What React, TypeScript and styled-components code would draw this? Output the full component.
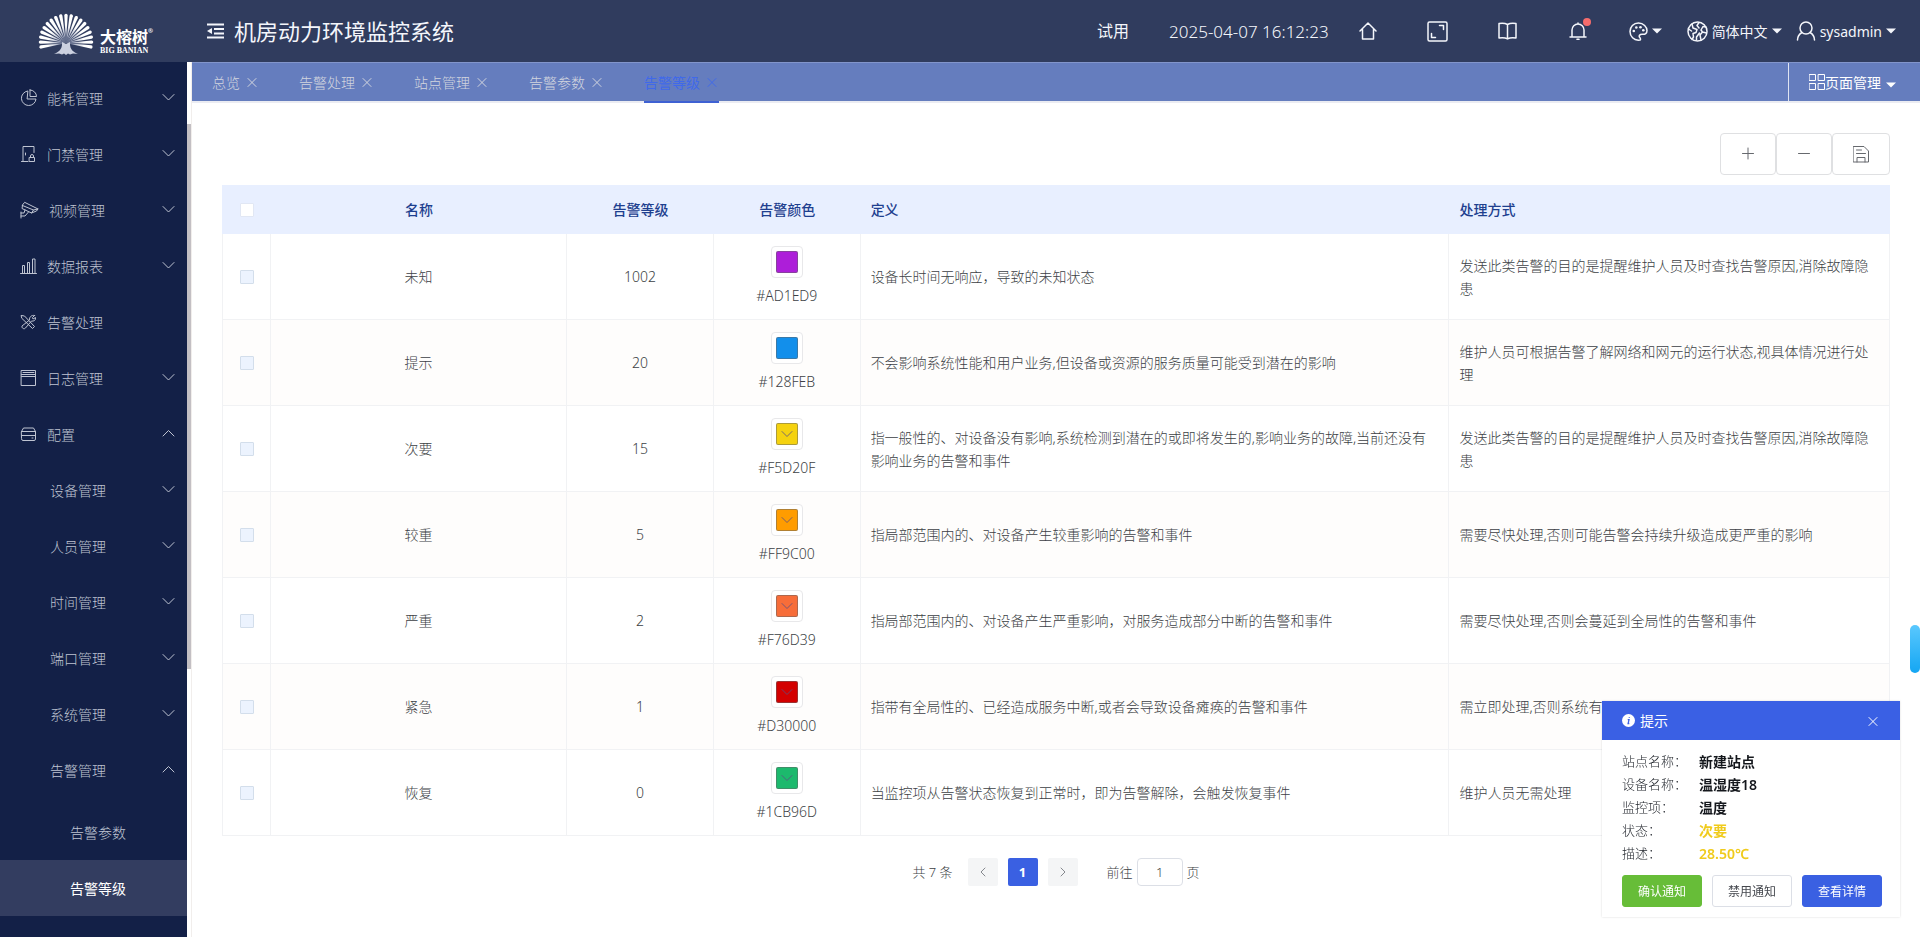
import React, { useState } from "react";
import styled, { createGlobalStyle } from "styled-components";

const GlobalStyle = createGlobalStyle`
  *, *::before, *::after { box-sizing: border-box; }
  body {
    margin: 0;
    background: #fff;
    color: #3c3f45;
    font-family: "Noto Sans", "Noto Sans CJK SC", sans-serif;
    font-size: 14px;
    line-height: 23px;
  }
  button, input { font: inherit; color: inherit; }
  button { padding: 0; border: 0; background: none; cursor: pointer; }
  svg { display: block; flex: none; }
`;

const Page = styled.div`
  display: flex;
  flex-direction: column;
  min-height: 100vh;
`;

/* ---------- top bar ---------- */

const TopBar = styled.header`
  display: flex;
  align-items: center;
  height: 62px;
  padding: 0 24px 0 38px;
  background: #303c5e;
  color: #f4f6fb;
`;

const Logo = styled.a`
  display: flex;
  align-items: flex-end;
  gap: 6px;
  width: 169px;
  padding-top: 4px;
  color: #fff;
  text-decoration: none;
`;

const LogoWords = styled.span`
  display: flex;
  flex-direction: column;
`;

const LogoName = styled.span`
  display: flex;
  font-size: 16px;
  font-weight: 700;
  line-height: 19px;
`;

const LogoMark = styled.sup`
  font-size: 6px;
  line-height: 6px;
`;

const LogoLatin = styled.span`
  font-family: "Liberation Serif", serif;
  font-size: 8px;
  font-weight: 700;
  line-height: 8px;
  white-space: nowrap;
`;

const Title = styled.h1`
  margin: 0 auto 0 10px;
  font-size: 22px;
  font-weight: 400;
  line-height: 32px;
`;

const HeaderText = styled.span`
  margin-right: 40px;
  font-size: 16px;
  white-space: nowrap;
`;

const Clock = styled.time`
  margin-right: 4px;
  font-size: 17px;
  font-weight: 300;
  white-space: nowrap;
`;

const IconButton = styled.button`
  display: flex;
  justify-content: center;
  align-items: center;
  width: 70px;
  height: 32px;
`;

const BellWrap = styled.span`
  position: relative;
`;

const Dot = styled.span`
  position: absolute;
  top: -4px;
  right: -4px;
  width: 8px;
  height: 8px;
  border-radius: 50%;
  background: #f56c6c;
`;

const MenuButton = styled.button<{ $gap: number }>`
  display: flex;
  align-items: center;
  gap: 4px;
  margin-left: ${(p) => p.$gap}px;
  font-size: 14px;
  white-space: nowrap;
`;

/* ---------- side menu ---------- */

const Body = styled.div`
  display: flex;
  flex: 1;
`;

const Side = styled.nav`
  flex: none;
  width: 187px;
  padding-top: 8px;
  background: #132047;
`;

const SubMenu = styled.div`
  padding-top: 6px;
`;

const SideItem = styled.a<{ $level: number; $active?: boolean }>`
  display: flex;
  align-items: center;
  height: 56px;
  padding: 0 12px 0 ${(p) => [20, 50, 70][p.$level]}px;
  background: ${(p) => (p.$active ? "#333d60" : "transparent")};
  color: ${(p) => (p.$active ? "#fff" : "#bfc4d2")};
  font-weight: ${(p) => (p.$active ? 400 : 300)};
  text-decoration: none;
`;

const SideIcon = styled.span`
  display: flex;
  align-items: center;
  min-width: 17px;
  margin-right: 10px;
`;

const SideLabel = styled.span`
  flex: 1;
`;

const ScrollTrack = styled.div`
  display: flex;
  flex-direction: column;
  flex: none;
  width: 5px;
  border-right: 1px solid #f1eeec;

  &::before { content: ""; flex: 62; }
  &::after { content: ""; flex: 268; }
`;

const ScrollThumb = styled.div`
  flex: 545;
  width: 4px;
  background: #c3bfc3;
`;

/* ---------- page tabs ---------- */

const Main = styled.main`
  display: flex;
  flex-direction: column;
  flex: 1;
  min-width: 0;
`;

const TabBar = styled.div`
  display: flex;
  height: 41px;
  border-top: 1px solid #8295cb;
  background: linear-gradient(#657dbe 0 38px, #ebecf2 38px);
`;

const TabList = styled.div`
  display: flex;
  flex: 1;
`;

const Tab = styled.button<{ $active: boolean }>`
  display: flex;
  align-items: center;
  gap: 5px;
  height: 40px;
  margin: 0 20px;
  border-bottom: 2px solid ${(p) => (p.$active ? "#3e61d3" : "transparent")};
  color: ${(p) => (p.$active ? "#4069ea" : "#d2d5df")};
  font-weight: ${(p) => (p.$active ? 400 : 300)};
`;

const PageMenu = styled.button`
  display: flex;
  align-items: center;
  height: 38px;
  padding: 0 24px 0 20px;
  border-left: 1px solid #dfe4f2;
  color: #fff;

  & > :last-child { margin: 5px 0 0 5px; }
`;

/* ---------- content ---------- */

const Content = styled.section`
  display: flex;
  flex-direction: column;
  padding: 30px 30px 0;
`;

const Toolbar = styled.div`
  display: flex;
  justify-content: flex-end;
  margin-bottom: 10px;
`;

const ToolButton = styled.button`
  display: flex;
  align-items: center;
  height: 42px;
  padding: 0 20px;
  border: 1px solid #dfe0e2;
  border-radius: 4px;
  background: #fff;
  color: #66696e;
`;

const Table = styled.table`
  width: 100%;
  table-layout: fixed;
  border-collapse: separate;
  border-spacing: 0;
`;

const HeadCell = styled.th<{ $center?: boolean }>`
  height: 49px;
  padding: 0 10px;
  background: #e8efff;
  color: #1e3f8f;
  font-weight: 500;
  text-align: ${(p) => (p.$center ? "center" : "left")};
`;

const Row = styled.tr`
  &:nth-child(even) { background: #fefdfc; }
`;

const Cell = styled.td<{ $center?: boolean }>`
  height: 86px;
  padding: 0 10px;
  border-right: 1px solid #f1f2f4;
  border-bottom: 1px solid #f1f2f4;
  font-weight: 300;
  text-align: ${(p) => (p.$center ? "center" : "left")};

  &:first-child { border-left: 1px solid #f1f2f4; }
`;

const Check = styled.input<{ $head?: boolean }>`
  display: block;
  appearance: none;
  width: 14px;
  height: 14px;
  margin: 0 auto;
  border: 1px solid ${(p) => (p.$head ? "#e1e7f4" : "#d3deeb")};
  border-radius: 1px;
  background: ${(p) => (p.$head ? "#fff" : "#ecf3fe")};
`;

const ColorCell = styled.div`
  display: flex;
  flex-direction: column;
  align-items: center;
  gap: 6px;
`;

const PickerButton = styled.button`
  padding: 4px;
  border: 1px solid #e8e8ea;
  border-radius: 4px;
  background: #fff;
`;

const Swatch = styled.span<{ $color: string }>`
  display: flex;
  align-items: center;
  justify-content: center;
  width: 22px;
  height: 22px;
  border: 1px solid rgba(100, 100, 100, 0.5);
  border-radius: 2px;
  background: ${(p) => p.$color};
  color: ${(p) => (p.$color === "#AD1ED9" || p.$color === "#128FEB" ? "transparent" : "rgba(90, 80, 130, 0.8)")};
`;

const Pager = styled.div`
  display: flex;
  align-items: center;
  justify-content: center;
  margin-top: 22px;
  font-size: 13px;
  font-weight: 300;
`;

const PageList = styled.div`
  display: flex;
  gap: 10px;
  margin: 0 29px 0 15px;
`;

const PageButton = styled.button<{ $active?: boolean }>`
  display: flex;
  align-items: center;
  justify-content: center;
  width: 30px;
  height: 28px;
  border-radius: 2px;
  background: ${(p) => (p.$active ? "#3a60e2" : "#f4f5f6")};
  color: ${(p) => (p.$active ? "#fff" : "#85888e")};
  font-weight: 700;
`;

const Jump = styled.label`
  display: flex;
  align-items: center;
  gap: 4px;
`;

const JumpInput = styled.input`
  width: 46px;
  height: 28px;
  padding: 0;
  border: 1px solid #dcdfe6;
  border-radius: 4px;
  background: #fff;
  text-align: center;
`;

/* ---------- floating parts ---------- */

const Notice = styled.aside`
  position: fixed;
  right: 20px;
  bottom: 20px;
  width: 298px;
  background: #fff;
  box-shadow: 0 0 2px rgba(0, 0, 0, 0.15);
`;

const NoticeHead = styled.div`
  display: flex;
  align-items: center;
  gap: 5px;
  height: 39px;
  padding: 0 20px;
  background: #3a60e4;
  color: #fff;

  & > button { margin-left: auto; }
`;

const NoticeList = styled.dl`
  display: grid;
  grid-template-columns: 77px 1fr;
  margin: 0;
  padding: 10px 20px 10px;
`;

const NoticeLabel = styled.dt`
  color: #24282f;
  font-size: 13px;
  font-weight: 300;
`;

const NoticeValue = styled.dd<{ $alarm?: boolean }>`
  margin: 0;
  color: ${(p) => (p.$alarm ? "#f0cb1c" : "#14171c")};
  font-weight: 600;
`;

const NoticeActions = styled.div`
  display: flex;
  gap: 10px;
  padding: 0 18px 10px 20px;
`;

const ActionButton = styled.button<{ $fill: string; $line: string; $ink: string }>`
  width: 80px;
  height: 32px;
  border: 1px solid ${(p) => p.$line};
  border-radius: 3px;
  background: ${(p) => p.$fill};
  color: ${(p) => p.$ink};
  font-size: 12px;
`;

const Handle = styled.button`
  position: fixed;
  right: 0;
  bottom: 264px;
  width: 10px;
  height: 48px;
  border-radius: 5px;
  background: linear-gradient(#5ac8fe, #14a6f3);
`;

/* ---------- drawings ---------- */

type GlyphProps = { w: number; h: number; sw?: number; children: React.ReactNode };

const Glyph = ({ w, h, sw = 1, children }: GlyphProps) => (
  <svg width={w} height={h} viewBox={`0 0 ${w} ${h}`} fill="none" stroke="currentColor"
    strokeWidth={sw} strokeLinecap="round" strokeLinejoin="round" aria-hidden="true">
    {children}
  </svg>
);

const Caret = () => (
  <Glyph w={10} h={6}><path d="M0 0.5h10L5 5.5z" fill="currentColor" stroke="none" /></Glyph>
);
const Chevron = ({ up }: { up?: boolean }) => (
  <Glyph w={13} h={11}><path d={up ? "M1 7l5.500-5.500L12 7" : "M1 1.500l5.500 5.500L12 1.500"} /></Glyph>
);
const Cross = () => (
  <Glyph w={14} h={14}><path d="M3 3.500l8 8M11 3.500l-8 8" /></Glyph>
);

const BLADES = Array.from({ length: 19 }, (_, i) => -99 + i * 11);

const Tree = () => (
  <svg width="56" height="43" viewBox="0 0 56 43" aria-hidden="true">
    <defs>
      <radialGradient id="blade" gradientUnits="userSpaceOnUse" cx="28" cy="31" r="30">
        <stop offset="0.15" stopColor="#8e97b3" />
        <stop offset="0.6" stopColor="#fff" />
      </radialGradient>
    </defs>
    {BLADES.map((a) => {
      const r = 27.5 + 2 * Math.cos((a * Math.PI) / 180);
      return (
        <path key={a} transform={`rotate(${a} 28 31)`} fill="url(#blade)"
          d={`M28 31L26.300 ${33 - r}a1.700 1.700 0 0 1 3.400 0z`} />
      );
    })}
    <path fill="#ccd1e0" d="M24 30l4 2 4-2v2c0 5 3 8 8 10l-5-.4-3 .9-2-1-2 1.500-2-1.500-2 1-3-.9-5 .4c5-2 8-5 8-10z" />
  </svg>
);

const FoldIcon = () => (
  <Glyph w={17} h={16} sw={2}>
    <path strokeLinecap="butt" d="M0 1.500h17M7 6h10M7 10.500h10M0 14.500h17" />
    <path d="M0 8l5-3v6z" fill="currentColor" stroke="none" />
  </Glyph>
);
const HomeIcon = () => (
  <Glyph w={18} h={18} sw={1.5}><path d="M1 9l8-8 8 8M3.500 7.500V17h11V7.500" /></Glyph>
);
const FullIcon = () => (
  <Glyph w={21} h={21} sw={1.5}>
    <rect x="1" y="1" width="19" height="19" rx="1.500" />
    <path d="M12.500 4.500h4v4M4.500 12.500v4h4" />
  </Glyph>
);
const BookIcon = () => (
  <Glyph w={19} h={18} sw={1.5}>
    <path d="M9.500 2.500C7 1 4 1 1 1.500v14.500c3-.5 6-.5 8.500.9 2.500-1.400 5.500-1.400 8.500-.9V1.500c-3-.5-6-.5-8.500 1zM9.500 2.500v14" />
  </Glyph>
);
const BellIcon = () => (
  <Glyph w={18} h={18} sw={1.5}>
    <path d="M1 15h16M3 15V8a6 6 0 0 1 12 0v7M9 2V1M8 17.300h2" />
  </Glyph>
);
const PaletteIcon = () => (
  <Glyph w={19} h={19} sw={1.5}>
    <path d="M11 18C4.500 19 1 14 1 9.500 1 5 4.500 1 9.500 1S18 5 18 8.500c0 3-2 4-4.500 3.800-3-.2-4 1.700-2.700 3.200.8 1 1 2.200.2 2.500z" />
    <g fill="currentColor" stroke="none">
      <circle cx="4.800" cy="9" r="1.300" /><circle cx="7.300" cy="5.500" r="1.300" />
      <circle cx="11.500" cy="5.300" r="1.300" /><circle cx="14.300" cy="8.200" r="1.300" />
    </g>
  </Glyph>
);
const GlobeIcon = () => (
  <Glyph w={21} h={21} sw={1.5}>
    <circle cx="10.500" cy="10.500" r="9.500" />
    <path d="M5 3l1 4 4 1.500-1 3-3 1 .5 3.500L5 18.500M1.500 8l3 2M12 1.500l-2 3 2 2.500M19 6l-3-.5-2 3.500 1.500 2-2.500 3 1 5M15.500 11l4 1M9.500 19v-3l3-4" />
  </Glyph>
);
const UserIcon = () => (
  <Glyph w={20} h={20} sw={1.5}>
    <circle cx="10" cy="7" r="6" /><path d="M1.500 19c0-3.500 2-6 4.500-7.500M18.500 19c0-3.500-2-6-4.500-7.500" />
  </Glyph>
);
const GridIcon = () => (
  <Glyph w={16} h={16}>
    <path d="M.5.5h6v6h-6zM9.500.5h6v6h-6zM.5 9.500h6v6h-6zM9.500 9.500h6v6h-6z" />
  </Glyph>
);
const SaveIcon = () => (
  <Glyph w={16} h={17}>
    <path d="M.5.500H11l4.500 4.500v11H.5zM3.500 4h5M3.500 7.500h9M4 16v-4.500h8V16" />
  </Glyph>
);

const PieIcon = () => (
  <Glyph w={17} h={18}>
    <path d="M7.500 2A7.300 7.300 0 1 0 16 10H7.500z" /><path d="M10 1v6.500h6.500A6.500 6.500 0 0 0 10 1z" />
  </Glyph>
);
const DoorIcon = () => (
  <Glyph w={17} h={18}>
    <path d="M14 7.500V1.500H3v15h5M1.500 16.500H3M5.500 8v2M9.500 12.500h5v4h-5zM10.500 12.500v-1.500a1.500 1.500 0 0 1 3 0v1.500" />
  </Glyph>
);
const CameraIcon = () => (
  <Glyph w={19} h={18}>
    <path d="M5 1.500l13 6.500-4.500 1-11-4.500zM2.500 4.500l-.5 3 9.500 4.500 2-3M11.500 12l5-2 1.500-2M1 11v6M1 15h4l3.500-4M1 12h3l1-3" />
  </Glyph>
);
const BarsIcon = () => (
  <Glyph w={17} h={16}>
    <path d="M.5 15.500h16M2.500 15.500v-8h2v8M7.500 15.500v-11h2v11M12.500 15.500V1h2.500v14.500" />
  </Glyph>
);
const ToolsIcon = () => (
  <Glyph w={17} h={16}>
    <path d="M1.500 1.500l3 .5 10 10.500-2 2L2 4.500zM14.500 1.500l-2 2 .5 1.500 2.500-1.500c.5 3-2 4-4 3.500l-6 7c-1 1.500-4 .5-3.500-2L9.500 6C9 3.500 11.500.500 14.500 1.500z" />
  </Glyph>
);
const LogIcon = () => (
  <Glyph w={17} h={16}><path d="M1.500.5h14v15h-14zM1.500 4.500h14M3 2.500h11M1.500 6.500h14" /></Glyph>
);
const ConfigIcon = () => (
  <Glyph w={17} h={14}>
    <path d="M1.500 4.500l2-3.500h10l2 3.500V12q0 1.500-1.500 1.500H3q-1.500 0-1.500-1.500zM1.500 4.500h14M1.500 8.500h14M12 11h1" />
  </Glyph>
);
const InfoIcon = () => (
  <svg width="13" height="13" viewBox="0 0 13 13" aria-hidden="true">
    <circle cx="6.500" cy="6.500" r="6.500" fill="#fff" />
    <path d="M7.300 3v.8M5.700 5.700h1.300l-.9 3.800h1.200" fill="none" stroke="#3a60e4" strokeWidth="1.300" />
  </svg>
);

/* ---------- data ---------- */

type MenuEntry = { label: string; level: number; icon?: React.ReactNode; open?: boolean; leaf?: boolean };

const MENU: MenuEntry[] = [
  { label: "能耗管理", level: 0, icon: <PieIcon /> },
  { label: "门禁管理", level: 0, icon: <DoorIcon /> },
  { label: "视频管理", level: 0, icon: <CameraIcon /> },
  { label: "数据报表", level: 0, icon: <BarsIcon /> },
  { label: "告警处理", level: 0, icon: <ToolsIcon />, leaf: true },
  { label: "日志管理", level: 0, icon: <LogIcon /> },
  { label: "配置", level: 0, icon: <ConfigIcon />, open: true },
  { label: "设备管理", level: 1 },
  { label: "人员管理", level: 1 },
  { label: "时间管理", level: 1 },
  { label: "端口管理", level: 1 },
  { label: "系统管理", level: 1 },
  { label: "告警管理", level: 1, open: true },
];

const TABS = ["总览", "告警处理", "站点管理", "告警参数", "告警等级"];

const LEVELS = [
  { name: "未知", level: 1002, color: "#AD1ED9", def: "设备长时间无响应，导致的未知状态", action: "发送此类告警的目的是提醒维护人员及时查找告警原因,消除故障隐患" },
  { name: "提示", level: 20, color: "#128FEB", def: "不会影响系统性能和用户业务,但设备或资源的服务质量可能受到潜在的影响", action: "维护人员可根据告警了解网络和网元的运行状态,视具体情况进行处理" },
  { name: "次要", level: 15, color: "#F5D20F", def: "指一般性的、对设备没有影响,系统检测到潜在的或即将发生的,影响业务的故障,当前还没有影响业务的告警和事件", action: "发送此类告警的目的是提醒维护人员及时查找告警原因,消除故障隐患" },
  { name: "较重", level: 5, color: "#FF9C00", def: "指局部范围内的、对设备产生较重影响的告警和事件", action: "需要尽快处理,否则可能告警会持续升级造成更严重的影响" },
  { name: "严重", level: 2, color: "#F76D39", def: "指局部范围内的、对设备产生严重影响，对服务造成部分中断的告警和事件", action: "需要尽快处理,否则会蔓延到全局性的告警和事件" },
  { name: "紧急", level: 1, color: "#D30000", def: "指带有全局性的、已经造成服务中断,或者会导致设备瘫痪的告警和事件", action: "需立即处理,否则系统有" },
  { name: "恢复", level: 0, color: "#1CB96D", def: "当监控项从告警状态恢复到正常时，即为告警解除，会触发恢复事件", action: "维护人员无需处理" },
];

const NOTICE = [
  { label: "站点名称：", value: "新建站点" },
  { label: "设备名称：", value: "温湿度18" },
  { label: "监控项：", value: "温度" },
  { label: "状态：", value: "次要", alarm: true },
  { label: "描述：", value: "28.50℃", alarm: true },
];

export default function App() {
  const [tab, setTab] = useState("告警等级");
  const [notice, setNotice] = useState(true);

  return (
    <Page>
      <GlobalStyle />
      <TopBar>
        <Logo href="#">
          <Tree />
          <LogoWords>
            <LogoName>大榕树<LogoMark>®</LogoMark></LogoName>
            <LogoLatin>BIG BANIAN</LogoLatin>
          </LogoWords>
        </Logo>
        <button aria-label="折叠菜单"><FoldIcon /></button>
        <Title>机房动力环境监控系统</Title>
        <HeaderText>试用</HeaderText>
        <Clock dateTime="2025-04-07T16:12:23">2025-04-07 16:12:23</Clock>
        <IconButton aria-label="首页"><HomeIcon /></IconButton>
        <IconButton aria-label="全屏"><FullIcon /></IconButton>
        <IconButton aria-label="手册"><BookIcon /></IconButton>
        <IconButton aria-label="消息"><BellWrap><BellIcon /><Dot /></BellWrap></IconButton>
        <MenuButton $gap={16} aria-label="主题"><PaletteIcon /><Caret /></MenuButton>
        <MenuButton $gap={25}><GlobeIcon />简体中文<Caret /></MenuButton>
        <MenuButton $gap={14}><UserIcon />sysadmin<Caret /></MenuButton>
      </TopBar>

      <Body>
        <Side>
          {MENU.map((m) => (
            <SideItem key={m.label} href="#" $level={m.level}>
              {m.icon && <SideIcon>{m.icon}</SideIcon>}
              <SideLabel>{m.label}</SideLabel>
              {!m.leaf && <Chevron up={m.open} />}
            </SideItem>
          ))}
          <SubMenu>
            <SideItem href="#" $level={2}>告警参数</SideItem>
            <SideItem href="#" $level={2} $active>告警等级</SideItem>
          </SubMenu>
        </Side>
        <ScrollTrack><ScrollThumb /></ScrollTrack>

        <Main>
          <TabBar>
            <TabList>
              {TABS.map((t) => (
                <Tab key={t} $active={t === tab} onClick={() => setTab(t)}>{t}<Cross /></Tab>
              ))}
            </TabList>
            <PageMenu><GridIcon />页面管理<Caret /></PageMenu>
          </TabBar>

          <Content>
            <Toolbar>
              <ToolButton aria-label="新增"><Glyph w={14} h={14}><path d="M1.500 6.500h11M7 1v11" /></Glyph></ToolButton>
              <ToolButton aria-label="删除"><Glyph w={14} h={14}><path d="M1.500 6.500h11" /></Glyph></ToolButton>
              <ToolButton aria-label="保存"><SaveIcon /></ToolButton>
            </Toolbar>

            <Table>
              <colgroup>
                <col style={{ width: "49px" }} />
                <col style={{ width: "17.75%" }} />
                <col style={{ width: "8.8%" }} />
                <col style={{ width: "8.8%" }} />
                <col style={{ width: "35.3%" }} />
                <col />
              </colgroup>
              <thead>
                <tr>
                  <HeadCell $center><Check type="checkbox" $head aria-label="全选" /></HeadCell>
                  <HeadCell $center>名称</HeadCell>
                  <HeadCell $center>告警等级</HeadCell>
                  <HeadCell $center>告警颜色</HeadCell>
                  <HeadCell>定义</HeadCell>
                  <HeadCell>处理方式</HeadCell>
                </tr>
              </thead>
              <tbody>
                {LEVELS.map((r) => (
                  <Row key={r.name}>
                    <Cell $center><Check type="checkbox" aria-label={r.name} /></Cell>
                    <Cell $center>{r.name}</Cell>
                    <Cell $center>{r.level}</Cell>
                    <Cell $center>
                      <ColorCell>
                        <PickerButton aria-label={r.color}>
                          <Swatch $color={r.color}>
                            <Glyph w={12} h={8}><path d="M1 1.500l5 5 5-5" /></Glyph>
                          </Swatch>
                        </PickerButton>
                        {r.color}
                      </ColorCell>
                    </Cell>
                    <Cell>{r.def}</Cell>
                    <Cell>{r.action}</Cell>
                  </Row>
                ))}
              </tbody>
            </Table>

            <Pager>
              <span>共 7 条</span>
              <PageList>
                <PageButton aria-label="上一页"><Glyph w={6} h={10}><path d="M5 1L1 5l4 4" /></Glyph></PageButton>
                <PageButton $active>1</PageButton>
                <PageButton aria-label="下一页"><Glyph w={6} h={10}><path d="M1 1l4 4-4 4" /></Glyph></PageButton>
              </PageList>
              <Jump>前往<JumpInput type="text" defaultValue="1" />页</Jump>
            </Pager>
          </Content>
        </Main>
      </Body>

      <Handle aria-label="展开" />

      {notice && (
        <Notice>
          <NoticeHead>
            <InfoIcon />提示
            <button aria-label="关闭" onClick={() => setNotice(false)}><Cross /></button>
          </NoticeHead>
          <NoticeList>
            {NOTICE.map((n) => (
              <React.Fragment key={n.label}>
                <NoticeLabel>{n.label}</NoticeLabel>
                <NoticeValue $alarm={n.alarm}>{n.value}</NoticeValue>
              </React.Fragment>
            ))}
          </NoticeList>
          <NoticeActions>
            <ActionButton $fill="#67bd38" $line="#67bd38" $ink="#fff">确认通知</ActionButton>
            <ActionButton $fill="#fff" $line="#dcdfe6" $ink="#45484e">禁用通知</ActionButton>
            <ActionButton $fill="#3a60e2" $line="#3a60e2" $ink="#fff">查看详情</ActionButton>
          </NoticeActions>
        </Notice>
      )}
    </Page>
  );
}
